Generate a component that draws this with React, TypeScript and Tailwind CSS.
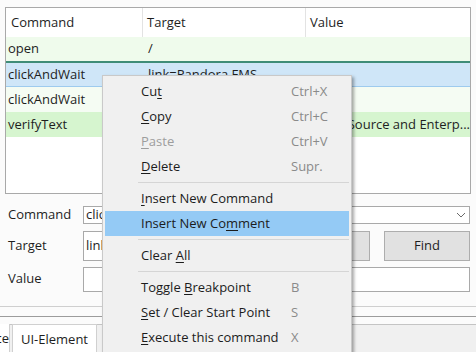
import React from 'react'

const FONT = { fontFamily: '"Open Sans", "Noto Sans", "Liberation Sans", sans-serif' }

type Row = { cmd: string; target: string; value: string; kind: 'light' | 'sel' | 'plain' | 'green' }

const ROWS: Row[] = [
  { cmd: 'open', target: '/', value: '', kind: 'light' },
  { cmd: 'clickAndWait', target: 'link=Pandora FMS', value: '', kind: 'sel' },
  { cmd: 'clickAndWait', target: 'link=Features', value: '', kind: 'plain' },
  { cmd: 'verifyText', target: 'css=h1', value: 'Open Source and Enterp...', kind: 'green' },
]

const ROW_BG: Record<Row['kind'], string> = {
  light: 'bg-[#effbec] h-[24px]',
  sel: 'bg-[#cfe6f8] h-[26px] border-t-2 border-t-[#3f8d78] border-b border-b-[#9ecbee]',
  plain: 'bg-[#f5fcf3] h-[25px]',
  green: 'bg-[#d6f5cf] h-[25px]',
}

type Item = { pre: string; u: string; post: string; key?: string; disabled?: boolean; active?: boolean } | 'sep'

const MENU: Item[] = [
  { pre: 'Cu', u: 't', post: '', key: 'Ctrl+X' },
  { pre: '', u: 'C', post: 'opy', key: 'Ctrl+C' },
  { pre: '', u: 'P', post: 'aste', key: 'Ctrl+V', disabled: true },
  { pre: '', u: 'D', post: 'elete', key: 'Supr.' },
  'sep',
  { pre: '', u: 'I', post: 'nsert New Command' },
  { pre: 'Insert New Co', u: 'm', post: 'ment', active: true },
  'sep',
  { pre: 'Clear ', u: 'A', post: 'll' },
  'sep',
  { pre: 'Toggle ', u: 'B', post: 'reakpoint', key: 'B' },
  { pre: '', u: 'S', post: 'et / Clear Start Point', key: 'S' },
  { pre: '', u: 'E', post: 'xecute this command', key: 'X' },
]

function ContextMenu() {
  return (
    <div className="absolute left-[102px] top-[75px] w-[250px] h-[290px] bg-[#f0f0f0] border border-[#c9c9c9] shadow-[2px_2px_3px_rgba(0,0,0,0.35)] pt-[3px] px-[2px] text-[13px]">
      {MENU.map((it, i) =>
        it === 'sep' ? (
          <div key={i} className="h-[7px] flex items-center pl-[33px]">
            <div className="h-px w-full bg-[#d5d5d5]" />
          </div>
        ) : (
          <div key={i} className={`h-[25px] flex items-center ${it.active ? 'bg-[#94caf5]' : ''}`}>
            <span className={`pl-[36px] w-[186px] whitespace-nowrap ${it.disabled ? 'text-[#9d9d9d]' : 'text-[#1c1c1c]'}`}>
              {it.pre}<span className="underline underline-offset-2">{it.u}</span>{it.post}
            </span>
            {it.key && <span className="text-[#8a8a8a] whitespace-nowrap">{it.key}</span>}
          </div>
        )
      )}
    </div>
  )
}

export default function App() {
  return (
    <div className="relative w-[476px] h-[352px] overflow-hidden bg-[#fbfbfb] text-[13px] text-[#1e1e1e]" style={FONT}>
      <div className="pt-[7px] pl-[5px] pr-[5px]">
        <div className="h-[187px] border border-[#a9a9a9] bg-white overflow-hidden">
          <div className="grid grid-cols-[137px_163px_1fr] h-[29px] items-center">
            <div className="pl-[5px] h-full flex items-center border-r border-[#e3e3e3]">Command</div>
            <div className="pl-[4px] h-full flex items-center border-r border-[#e3e3e3]">Target</div>
            <div className="pl-[4px]">Value</div>
          </div>
          {ROWS.map((r, i) => (
            <div key={i} className={`grid grid-cols-[137px_163px_1fr] items-center ${ROW_BG[r.kind]}`}>
              <div className="pl-[2px] whitespace-nowrap">{r.cmd}</div>
              <div className="pl-[5px] whitespace-nowrap overflow-hidden">{r.target}</div>
              <div className="pl-[5px] whitespace-nowrap overflow-hidden">{r.value}</div>
            </div>
          ))}
        </div>
      </div>

      <div className="grid grid-cols-[75px_1fr] gap-y-[6px] pl-[8px] pr-[6px] mt-[11px] items-center">
        <div>Command</div>
        <div className="h-[18px] border border-[#a9a9a9] bg-white flex items-center justify-between pl-[2px] pr-[3px]">
          <span className="leading-none">clickAndWait</span>
          <svg width="10" height="6" viewBox="0 0 10 6" fill="none" stroke="#6a6a6a" strokeWidth="1"><polyline points="1,1 5,5 9,1" /></svg>
        </div>
        <div>Target</div>
        <div className="flex items-center gap-[14px] h-[30px]">
          <div className="flex-1 h-full border border-[#a9a9a9] bg-white flex items-center pl-[2px]">link=Pandora FMS</div>
          <div className="w-[86px] h-full border border-[#adadad] bg-[#e1e1e1] flex items-center justify-center">Select</div>
          <div className="w-[86px] h-full border border-[#adadad] bg-[#e1e1e1] flex items-center justify-center">Find</div>
        </div>
        <div>Value</div>
        <div className="h-[25px] border border-[#a9a9a9] bg-white" />
      </div>

      <div className="mt-[14px] border-t border-[#cfcfcf]" />
      <div className="mt-[9px] border-t border-[#9c9c9c]" />
      <div className="mt-[7px] h-[30px] bg-[#f0f0f0] border-t border-[#c4c4c4] flex items-stretch gap-[2px]">
        <div className="w-[10px] overflow-hidden flex justify-end bg-white border-r border-[#d0d0d0] -mt-px pt-[5px]">
          <span className="whitespace-nowrap">Reference</span>
        </div>
        <div className="w-[85px] bg-white border-x border-t border-[#d0d0d0] -mt-px flex justify-center pt-[5px]">UI-Element</div>
      </div>

      <ContextMenu />
    </div>
  )
}
